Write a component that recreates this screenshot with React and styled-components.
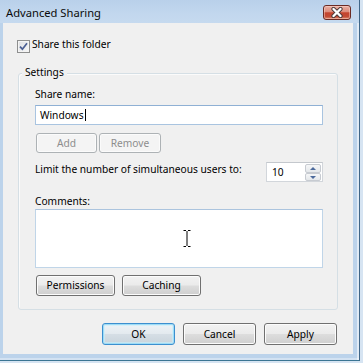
import React from "react";
import styled, { createGlobalStyle } from "styled-components";

const Global = createGlobalStyle`
  html, body { margin: 0; padding: 0; }
  body {
    background: #d6e4f2;
    font-family: "Noto Sans", "Open Sans", sans-serif;
    font-size: 10.2px;
    color: #000;
  }
  * { box-sizing: border-box; }
`;

const Desktop = styled.div`
  width: 363px;
  height: 363px;
  overflow: hidden;
  background: #d6e4f2;
`;

const Window = styled.div`
  width: 360px;
  height: 361px;
  display: flex;
  flex-direction: column;
  background: #bcd3eb;
  border-right: 1px solid #3f6688;
  border-bottom: 1px solid #3b7593;
  box-shadow: inset -2px 0 0 rgba(255, 255, 255, 0.55), inset 0 -2px 0 rgba(255, 255, 255, 0.35);
`;

const TitleBar = styled.div`
  height: 23px;
  flex-shrink: 0;
  display: flex;
  align-items: flex-start;
  padding: 0 8px 0 6px;
  background: linear-gradient(to bottom, #b9d0ea 0%, #c2d7ee 60%, #c6daef 100%);
`;

const Title = styled.div`
  flex: 1;
  padding-top: 6px;
  line-height: 14px;
  font-size: 11.2px;
  color: #0b0b0b;
  white-space: nowrap;
`;

const CloseButton = styled.div`
  margin-top: 5px;
  width: 28px;
  height: 15px;
  border: 1px solid #6b2b24;
  border-radius: 3px;
  display: flex;
  align-items: center;
  justify-content: center;
  background: linear-gradient(
    to bottom,
    #eab0a4 0%,
    #dc8c7b 45%,
    #c4442e 52%,
    #c24a34 80%,
    #dc8a6e 100%
  );
  box-shadow: inset 0 0 0 1px rgba(255, 220, 210, 0.45);
`;

const Client = styled.div`
  margin-left: 3px;
  width: 350px;
  height: 331px;
  flex-shrink: 0;
  background: #f0f0f0;
  display: flex;
  flex-direction: column;
  padding-top: 15px;
`;

const CheckRow = styled.div`
  margin-left: 14px;
  display: flex;
  align-items: flex-start;
  gap: 2px;
`;

const CheckBox = styled.div`
  margin-top: 2px;
  width: 13px;
  height: 13px;
  border: 1px solid #8e8f8f;
  background: linear-gradient(to bottom right, #dcdee2, #f8f8f8);
  box-shadow: inset 0 0 0 1px #f4f4f4;
  display: flex;
  align-items: center;
  justify-content: center;
`;

const Text = styled.span`
  line-height: 13px;
  white-space: nowrap;
  margin-top: ${(p) => p.$top || 0}px;
`;

const GroupBox = styled.div`
  position: relative;
  margin: 20px 0 0 15px;
  width: 320px;
  height: 237px;
  border: 1px solid #d5dfe5;
  border-radius: 3px;
  box-shadow: inset 1px 1px 0 #fbfbfb;
  padding: 14px 14px 13px 16px;
  display: flex;
  flex-direction: column;
`;

const Legend = styled.span`
  position: absolute;
  top: -8px;
  left: 3px;
  padding: 0 3px;
  line-height: 13px;
  background: #f0f0f0;
`;

const FieldLabel = styled.div`
  line-height: 13px;
  margin-top: ${(p) => p.$top || 0}px;
`;

const TextBox = styled.div`
  margin-top: ${(p) => p.$top || 0}px;
  width: 288px;
  height: ${(p) => p.$height}px;
  background: #fff;
  border: 1px solid ${(p) => p.$border};
  border-top-color: ${(p) => p.$borderTop};
  padding-left: 4px;
  line-height: ${(p) => p.$height - 2}px;
  position: relative;
  white-space: nowrap;
`;

const Caret = styled.span`
  display: inline-block;
  width: 1px;
  height: 12px;
  background: #000;
  vertical-align: -2px;
  margin-left: 1px;
`;

const ButtonRow = styled.div`
  display: flex;
  gap: ${(p) => p.$gap}px;
  margin-top: ${(p) => p.$top}px;
  padding-left: ${(p) => p.$left || 0}px;
  padding-right: ${(p) => p.$right || 0}px;
  justify-content: ${(p) => (p.$end ? "flex-end" : "flex-start")};
`;

const variants = {
  normal: `
    border: 1px solid #707070;
    background: linear-gradient(to bottom, #f2f2f2 0%, #ebebeb 48%, #dddddd 52%, #cfcfcf 100%);
    box-shadow: inset 0 0 0 1px #fcfcfc;
    color: #000;
  `,
  disabled: `
    border: 1px solid #adb2b5;
    background: #f4f4f4;
    box-shadow: inset 0 0 0 1px #fbfbfb;
    color: #8d8d8d;
  `,
  primary: `
    border: 1px solid #3c8fcf;
    background: linear-gradient(to bottom, #eef3f6 0%, #e3eaef 48%, #d5dee5 52%, #c9d4dc 100%);
    box-shadow: inset 0 0 0 1px #9edcf6, inset 0 0 0 2px rgba(200, 238, 252, 0.6);
    color: #000;
  `,
};

const Button = styled.button`
  width: ${(p) => p.$width}px;
  height: ${(p) => p.$height}px;
  padding: 0;
  border-radius: 3px;
  font-family: inherit;
  font-size: 10.2px;
  line-height: ${(p) => p.$height - 2}px;
  text-align: center;
  ${(p) => variants[p.$variant || "normal"]}
`;

const LimitRow = styled.div`
  margin-top: 9px;
  height: 20px;
  display: flex;
  justify-content: space-between;
  align-items: flex-start;
`;

const Spinner = styled.div`
  width: 57px;
  height: 20px;
  background: #fff;
  border: 1px solid #d2d6db;
  border-top-color: #c4c8cd;
  display: flex;
`;

const SpinValue = styled.div`
  flex: 1;
  padding-left: 5px;
  line-height: 18px;
`;

const SpinColumn = styled.div`
  width: 16px;
  margin: 1px 1px 0 0;
  display: flex;
  flex-direction: column;
`;

const SpinButton = styled.div`
  height: ${(p) => p.$height}px;
  border: 1px solid #c7cbd1;
  border-radius: 2px;
  background: linear-gradient(to bottom, #f6f7f8, #e4e7ea);
  display: flex;
  align-items: center;
  justify-content: center;
`;

const Arrow = styled.div`
  width: 0;
  height: 0;
  border-left: 3px solid transparent;
  border-right: 3px solid transparent;
  ${(p) =>
    p.$up
      ? "border-bottom: 3px solid #4c6a9c;"
      : "border-top: 3px solid #4c6a9c;"}
`;

const Pointer = styled.svg`
  position: absolute;
  left: 147px;
  top: 20px;
`;

export default function App() {
  return (
    <>
      <Global />
      <Desktop>
        <Window>
          <TitleBar>
            <Title>Advanced Sharing</Title>
            <CloseButton>
              <svg width="14" height="11" viewBox="0 0 14 11">
                <path d="M3.5 2 L10.5 9 M10.5 2 L3.5 9" stroke="#4a3a3a" strokeWidth="4.2" strokeLinecap="round" />
                <path d="M3.5 2 L10.5 9 M10.5 2 L3.5 9" stroke="#ffffff" strokeWidth="2.4" strokeLinecap="round" />
              </svg>
            </CloseButton>
          </TitleBar>
          <Client>
            <CheckRow>
              <CheckBox>
                <svg width="9" height="9" viewBox="0 0 9 9">
                  <path d="M1 4.6 L3.4 7.2 L8 1.2" fill="none" stroke="#4b5f93" strokeWidth="1.7" />
                </svg>
              </CheckBox>
              <Text>Share this folder</Text>
            </CheckRow>
            <GroupBox>
              <Legend>Settings</Legend>
              <FieldLabel>Share name:</FieldLabel>
              <TextBox $top={4} $height={20} $border="#a9c4e0" $borderTop="#8fb0d4">
                Windows
                <Caret />
              </TextBox>
              <ButtonRow $gap={2} $top={8} $left={1}>
                <Button $variant="disabled" $width={61} $height={20}>Add</Button>
                <Button $variant="disabled" $width={62} $height={20}>Remove</Button>
              </ButtonRow>
              <LimitRow>
                <Text $top={1}>Limit the number of simultaneous users to:</Text>
                <Spinner>
                  <SpinValue>10</SpinValue>
                  <SpinColumn>
                    <SpinButton $height={9}><Arrow $up /></SpinButton>
                    <SpinButton $height={8}><Arrow /></SpinButton>
                  </SpinColumn>
                </Spinner>
              </LimitRow>
              <FieldLabel $top={13}>Comments:</FieldLabel>
              <TextBox $top={1} $height={59} $border="#c0d5e8" $borderTop="#abc4de">
                <Pointer width="8" height="17" viewBox="0 0 8 17">
                  <path d="M0.5 0.5 H3 M5 0.5 H7.5 M4 1 V16 M0.5 16.5 H3 M5 16.5 H7.5" stroke="#000" strokeWidth="1" fill="none" />
                </Pointer>
              </TextBox>
              <ButtonRow $gap={7} $top={7} $left={1}>
                <Button $width={79} $height={21}>Permissions</Button>
                <Button $width={79} $height={21}>Caching</Button>
              </ButtonRow>
            </GroupBox>
            <ButtonRow $gap={8} $top={13} $right={16} $end>
              <Button $variant="primary" $width={73} $height={22}>OK</Button>
              <Button $width={73} $height={22}>Cancel</Button>
              <Button $width={73} $height={22}>Apply</Button>
            </ButtonRow>
          </Client>
        </Window>
      </Desktop>
    </>
  );
}
